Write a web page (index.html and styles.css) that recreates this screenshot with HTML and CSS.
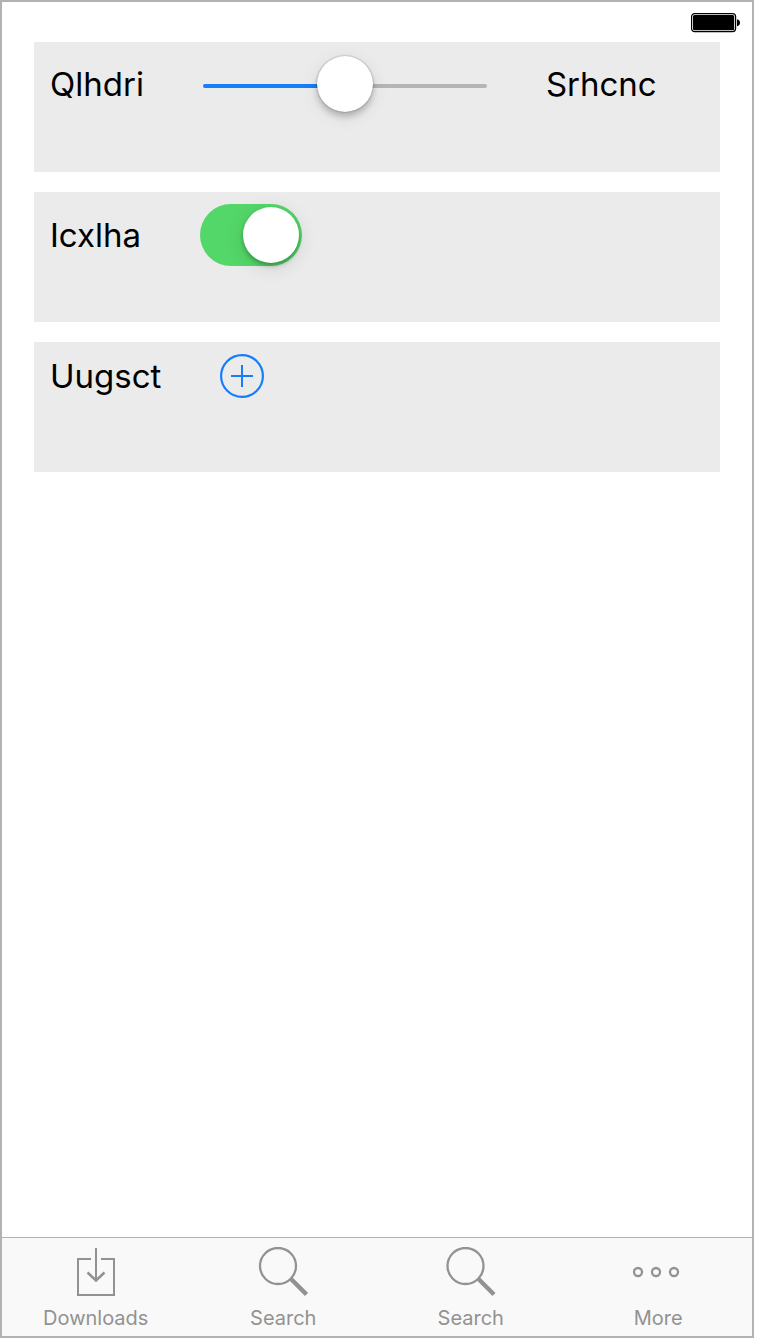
FILE: index.html
```html
<!DOCTYPE html>
<html lang="en">
<head>
<meta charset="utf-8">
<meta name="viewport" content="width=device-width, initial-scale=1">
<title>Controls</title>
<link rel="stylesheet" href="styles.css">
</head>
<body>
<div class="screen">
  <header class="status-bar">
    <svg class="battery" width="50" height="20" viewBox="0 0 50 20" role="img" aria-label="Battery full">
      <rect x="0.6" y="0.6" width="44" height="18" rx="3" fill="none" stroke="#000" stroke-width="1.2"/>
      <rect x="2" y="2" width="41.2" height="15.2" rx="1.5"/>
      <path d="M46 6.2c2 .4 3 1.700 3 3.500s-1 3.100-3 3.500z"/>
    </svg>
  </header>
  <main class="content">
    <section class="panel">
      <div class="row">
        <label class="label" for="level">Qlhdri</label>
        <input class="slider" id="level" type="range" min="0" max="100" value="50">
        <span class="label">Srhcnc</span>
      </div>
    </section>
    <section class="panel">
      <div class="row">
        <label class="label" for="toggle">Icxlha</label>
        <input class="switch" id="toggle" type="checkbox" role="switch" checked>
      </div>
    </section>
    <section class="panel">
      <div class="row">
        <span class="label" id="add-label">Uugsct</span>
        <button class="add" type="button" aria-labelledby="add-label">
          <svg width="44" height="44" viewBox="0 0 44 44" fill="none" stroke="currentColor" stroke-width="2" aria-hidden="true">
            <circle cx="22" cy="22" r="20.900" stroke-width="2.200"/>
            <path d="M22 11v22M11 22h22"/>
          </svg>
        </button>
      </div>
    </section>
  </main>
  <nav class="tab-bar">
    <a class="tab" href="#downloads">
      <svg class="tab-icon" viewBox="0 0 50 50" fill="none" stroke="currentColor" stroke-width="2" aria-hidden="true">
        <path d="M20 12H7v36h36V12H30M25 1v32"/>
        <path d="M16.500 25.500 25 33.500l8.500-8" stroke-width="2.500"/>
      </svg>
      <span>Downloads</span>
    </a>
    <a class="tab" href="#search">
      <svg class="tab-icon" viewBox="0 0 50 50" fill="none" stroke="currentColor" stroke-width="2.300" aria-hidden="true">
        <circle cx="20" cy="19" r="18"/>
        <path d="m32.500 31.500 16 16" stroke-width="4.500"/>
      </svg>
      <span>Search</span>
    </a>
    <a class="tab" href="#search-more">
      <svg class="tab-icon" viewBox="0 0 50 50" fill="none" stroke="currentColor" stroke-width="2.300" aria-hidden="true">
        <circle cx="19.500" cy="19" r="18"/>
        <path d="m32 31.500 16 16" stroke-width="4.500"/>
      </svg>
      <span>Search</span>
    </a>
    <a class="tab" href="#more">
      <svg class="tab-icon" viewBox="0 0 50 50" fill="none" stroke="currentColor" stroke-width="2.300" aria-hidden="true">
        <circle cx="5" cy="25" r="4"/>
        <circle cx="23" cy="25" r="4"/>
        <circle cx="41" cy="25" r="4"/>
      </svg>
      <span>More</span>
    </a>
  </nav>
</div>
</body>
</html>
```
FILE: styles.css
```css
* {
  box-sizing: border-box;
}

body {
  margin: 0;
  background: #fff;
  color: #000;
  font-family: Inter, "Liberation Sans", sans-serif;
}

.screen {
  display: flex;
  flex-direction: column;
  min-height: calc(100vh - 2px);
  margin: 0 6px 2px 0;
  border: 2px solid #b2b2b2;
}

.status-bar {
  display: flex;
  justify-content: flex-end;
  height: 40px;
  padding: 11px 11px 0;
}

.content {
  display: flex;
  flex: 1;
  flex-direction: column;
  gap: 20px;
  padding: 0 32px;
}

.panel {
  min-height: 130px;
  padding: 12px 16px;
  background: #ebebeb;
}

.row {
  display: flex;
  align-items: center;
  gap: 59px;
}

.label {
  font-size: 33px;
  line-height: 40px;
}

.slider {
  appearance: none;
  width: 284px;
  height: 60px;
  margin: 0;
  padding-top: 4px;
  background: transparent;
}

.slider::-webkit-slider-runnable-track {
  height: 4px;
  border-radius: 2px;
  background: linear-gradient(to right, #147efb 50%, #b5b5b5 50%);
}

.slider::-webkit-slider-thumb {
  appearance: none;
  width: 56px;
  height: 56px;
  margin-top: -28px;
  border-radius: 50%;
  background: #fff;
  box-shadow: 0 0 2px rgba(0, 0, 0, 0.4), 0 5px 6px rgba(0, 0, 0, 0.2), 0 4px 20px rgba(0, 0, 0, 0.08);
}

.switch {
  appearance: none;
  width: 102px;
  height: 62px;
  margin: 0;
  padding: 3px;
  border-radius: 31px;
  background: #53d769;
}

.switch::before {
  content: "";
  display: block;
  width: 56px;
  height: 56px;
  border-radius: 50%;
  background: #fff;
  box-shadow: 0 3px 4px rgba(0, 0, 0, 0.25), 0 4px 20px rgba(0, 0, 0, 0.12);
}

.switch:checked::before {
  margin-left: auto;
}

.add {
  width: 44px;
  height: 44px;
  padding: 0;
  border: 0;
  background: none;
  color: #147efb;
}

.add svg {
  display: block;
}

.tab-bar {
  display: grid;
  grid-template-columns: repeat(4, 1fr);
  border-top: 1px solid #b2b2b2;
  background: #f9f9f9;
}

.tab {
  display: flex;
  flex-direction: column;
  align-items: center;
  gap: 9px;
  padding: 9px 0 6px;
  color: #929292;
  font-size: 20px;
  line-height: 24px;
  text-decoration: none;
}

.tab-icon {
  width: 50px;
  height: 50px;
}
```
